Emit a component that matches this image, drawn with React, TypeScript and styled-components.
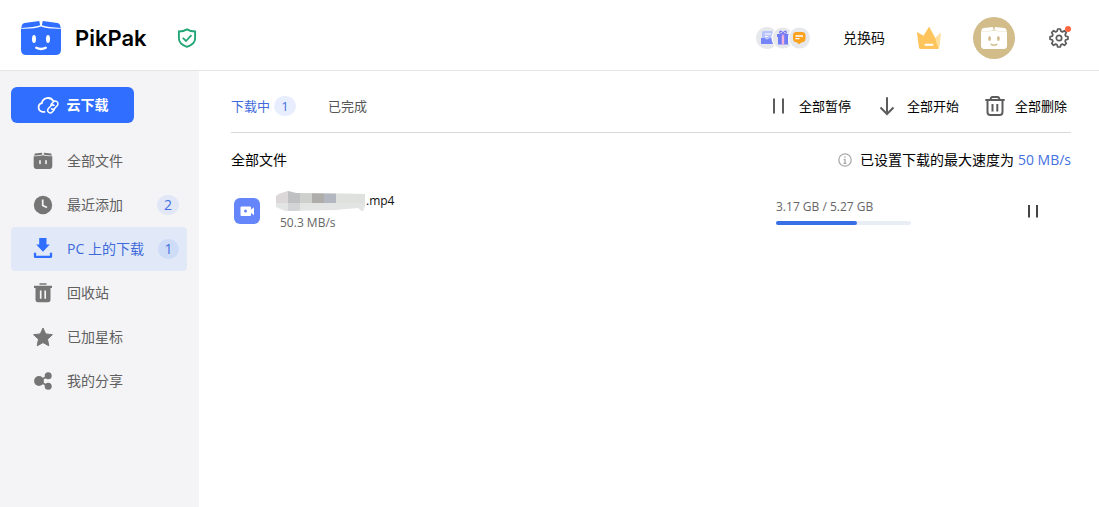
import React from "react";
import styled, { createGlobalStyle } from "styled-components";

const GlobalStyle = createGlobalStyle`
  *, *::before, *::after { box-sizing: border-box; }
  body {
    margin: 0;
    background: #fff;
    color: #111;
    font: 14px/20px "Open Sans", "Noto Sans CJK SC", sans-serif;
  }
  button { font: inherit; color: inherit; background: none; border: 0; padding: 0; cursor: pointer; }
  a { color: inherit; text-decoration: none; }
  svg { display: block; flex: none; }
  ul { list-style: none; margin: 0; padding: 0; }
`;

const Page = styled.div`
  display: flex;
  flex-direction: column;
  min-height: 100vh;
`;

const Header = styled.header`
  display: flex;
  align-items: center;
  justify-content: space-between;
  height: 71px;
  padding: 6px 28px 0 21px;
  border-bottom: 1px solid #e6e6e8;
`;

const Brand = styled.a`
  display: flex;
  align-items: center;
  gap: 14px;
`;

const BrandName = styled.span`
  font: 600 22px/32px Inter, sans-serif;
  color: #000;
`;

const HeaderGroup = styled.div<{ $gap: number }>`
  display: flex;
  align-items: center;
  gap: ${(p) => p.$gap}px;
`;

const Badges = styled.button`
  display: flex;
`;

const Avatar = styled.button`
  display: grid;
  place-items: center;
  width: 42px;
  height: 42px;
  border-radius: 50%;
  background: #d1bc8a;
`;

const SettingsButton = styled.button`
  position: relative;
  display: grid;
  place-items: center;
  width: 24px;
  height: 24px;
`;

const NoticeDot = styled.span`
  position: absolute;
  top: 0;
  right: 0;
  width: 6px;
  height: 6px;
  border-radius: 50%;
  background: #ff6540;
`;

const Body = styled.div`
  display: flex;
  flex: 1;
`;

const Sidebar = styled.aside`
  flex: none;
  width: 199px;
  padding: 16px 12px 16px 11px;
  background: #f4f4f6;
`;

const CloudButton = styled.button`
  display: flex;
  align-items: center;
  justify-content: center;
  gap: 8px;
  width: 123px;
  height: 36px;
  margin-bottom: 16px;
  border-radius: 6px;
  background: #306eff;
  color: #fff;
  font-weight: 700;
`;

const NavLink = styled.a<{ $active?: boolean }>`
  display: flex;
  align-items: center;
  gap: 14px;
  height: 44px;
  padding: 0 8px 0 22px;
  border-radius: 4px;
  background: ${(p) => (p.$active ? "#e1e9f8" : "transparent")};
  color: ${(p) => (p.$active ? "#4069da" : "#606060")};

  svg { color: ${(p) => (p.$active ? "#306eff" : "#757575")}; }
`;

const Count = styled.span<{ $tone: string }>`
  width: 22px;
  height: 20px;
  border-radius: 10px;
  background: ${(p) => p.$tone};
  color: #4470e0;
  text-align: center;
`;

const NavText = styled.span`
  flex: 1;
  white-space: nowrap;
`;

const Main = styled.main`
  flex: 1;
  min-width: 0;
  padding: 0 28px 0 32px;
`;

const Toolbar = styled.div`
  display: flex;
  align-items: center;
  justify-content: space-between;
  height: 62px;
  padding-top: 8px;
  border-bottom: 1px solid #d9d9d9;
  font-size: 13px;
`;

const Tabs = styled.div`
  display: flex;
  gap: 32px;
`;

const Tab = styled.button<{ $active?: boolean }>`
  display: flex;
  align-items: center;
  gap: 4px;
  color: ${(p) => (p.$active ? "#4069da" : "#555")};
`;

const Actions = styled.div`
  display: flex;
  gap: 26px;
  padding-right: 4px;
`;

const Action = styled.button`
  display: flex;
  align-items: center;
  gap: 10px;
  color: #000;

  svg { color: #5c5c5c; }
`;

const Summary = styled.div`
  display: flex;
  align-items: center;
  justify-content: space-between;
  height: 54px;
  color: #000;
`;

const Scope = styled.h1`
  margin: 0;
  font-size: 14px;
  font-weight: 400;
`;

const Limit = styled.p`
  display: flex;
  align-items: center;
  gap: 4px;
  margin: 0;

  svg { margin-right: 4px; color: #aaa; }
  a { color: #4470e0; }
`;

const FileRow = styled.li`
  display: grid;
  grid-template-columns: 1fr 295px;
  align-items: center;
  height: 48px;
`;

const FileInfo = styled.div`
  display: flex;
  align-items: center;
  gap: 16px;
  padding-left: 3px;
`;

const FileName = styled.div`
  display: flex;
  align-items: center;
  height: 24px;
  color: #111;
  font-size: 12px;
`;

const FileSpeed = styled.div`
  padding-left: 4px;
  color: #666;
  font-size: 12px;
`;

const Transfer = styled.div`
  display: flex;
  align-items: center;
  justify-content: space-between;
  padding-right: 28px;
`;

const Progress = styled.div`
  width: 135px;
  color: #666;
  font-size: 12px;
`;

const Track = styled.div`
  height: 4px;
  margin-top: 4px;
  border-radius: 2px;
  background: #e9edf4;
`;

const Fill = styled.div`
  height: 100%;
  border-radius: 2px;
  background: #386fe5;
`;

const PauseButton = styled.button`
  display: grid;
  place-items: center;
  width: 20px;
  height: 20px;
  color: #444;
`;

const LogoBox = () => (
  <svg width="40" height="34" viewBox="0 0 40 34" aria-hidden="true">
    <path d="M0 7.800Q13 8.200 20 5.600Q27 8.200 40 7.800V28.500Q40 34 34.500 34H5.500Q0 34 0 28.500Z" fill="#306eff" />
    <path d="M3.500 2 18.200 0 19.200 4.300Q13 6.700 .2 6.900L1 4Q1.500 2.400 3.500 2Z" fill="#306eff" />
    <path d="M36.500 2 21.800 0 20.800 4.300Q27 6.700 39.800 6.900L39 4Q38.500 2.400 36.500 2Z" fill="#306eff" />
    <ellipse cx="13" cy="18" rx="2" ry="3.900" fill="#fff" />
    <ellipse cx="27" cy="18" rx="2" ry="3.900" fill="#fff" />
    <path d="M15.300 26.700Q20 29.200 24.700 26.700" stroke="#fff" strokeWidth="2.400" strokeLinecap="round" fill="none" />
  </svg>
);

const AvatarBox = () => (
  <svg width="26" height="22" viewBox="0 0 26 22" aria-hidden="true">
    <path d="M2.500 1 12 0 12.700 3Q8 4.500 .2 4.500L.8 2.300Q1.200 1.200 2.500 1ZM23.500 1 14 0 13.300 3Q18 4.500 25.800 4.500L25.200 2.300Q24.800 1.200 23.500 1Z" fill="#fff" />
    <path d="M0 4.400Q8 4.800 13 3.500Q18 4.800 26 4.400V18.500Q26 22 22.500 22H3.500Q0 22 0 18.500Z" fill="#fff" />
    <ellipse cx="8.600" cy="11.500" rx="1.400" ry="2.600" fill="#d1bc8a" />
    <ellipse cx="17.400" cy="11.500" rx="1.400" ry="2.600" fill="#d1bc8a" />
    <path d="M10.200 17.400Q13 18.900 15.800 17.400" stroke="#d1bc8a" strokeWidth="1.500" strokeLinecap="round" fill="none" />
  </svg>
);

const ShieldIcon = () => (
  <svg width="20" height="20" viewBox="0 0 20 20" fill="none" stroke="#21a675" strokeWidth="1.900">
    <path d="M10 1.400Q13.500 3.500 18.100 3.500V10.500Q18.100 16 10 18.800Q1.900 16 1.900 10.500V3.500Q6.500 3.500 10 1.400Z" />
    <path d="M5.800 9.800 9 13 14.400 7.200" strokeWidth="1.800" />
  </svg>
);

const BadgeIcons = () => (
  <svg width="55" height="22" viewBox="0 0 55 22">
    <circle cx="11" cy="11" r="11" fill="#e7e8eb" />
    <rect x="6" y="4" width="11" height="12" rx="1.500" fill="#b9c3fb" />
    <path d="M9 7H15M9 9.500H12" stroke="#fff" />
    <path d="M5 11H8.500Q11 14 13.500 11H17V17H5Z" fill="#7485fa" />
    <circle cx="27" cy="11" r="11.500" fill="#fff" />
    <circle cx="27" cy="11" r="10.500" fill="#e7e8eb" />
    <path d="M21 7H33V10H21ZM22 10H32V17.500H22Z" fill="#6f7bf7" />
    <path d="M25.800 7H28.200V17.500H25.800Z" fill="#f6b3dd" />
    <path d="M27 7Q22.500 6.500 24 4.500Q26 3.500 27 7Q28 3.500 30 4.500Q31.500 6.500 27 7" stroke="#7b7bf2" strokeWidth="1.300" fill="none" />
    <circle cx="43.500" cy="11" r="11.500" fill="#fff" />
    <circle cx="43.500" cy="11" r="10.500" fill="#e7e8eb" />
    <path d="M40 5H46Q49.500 5 49.500 8.500V11.500Q49.500 15 46 15.300L43 17.200L40.500 15.300Q37 15 37 11.500V8.500Q37 5 40 5Z" fill="#fba21f" />
    <path d="M39.500 9H47M39.500 11.700H43.500" stroke="#fff" strokeWidth="1.300" />
  </svg>
);

const CrownIcon = () => (
  <svg width="24" height="24" viewBox="0 0 24 24">
    <path d="M24 6.500 22.500 21Q22.300 23 20.500 23H15L18 12Z" fill="#ffdf9b" />
    <path d="M.5 6.200 6.500 9.700 11.500 1.500Q12 .5 12.700 1.500L18 11.500 21.500 23H3.500Q2 23 1.800 21L0 6.700Q0 6 .5 6.200Z" fill="#ffc55c" />
    <path d="M8.500 18.700H15.500" stroke="#fff" strokeWidth="2" strokeLinecap="round" />
  </svg>
);

const GearIcon = () => (
  <svg width="20" height="20" viewBox="0 0 20 20" fill="none" stroke="#5c5c5c" strokeWidth="1.700" strokeLinejoin="round">
    <path d="M8.700 1H11.300L11.900 3.300 13.300 3.900 15.400 2.700 17.300 4.600 16.100 6.700 16.700 8.100 19 8.700V11.300L16.700 11.900 16.100 13.300 17.300 15.400 15.400 17.300 13.300 16.100 11.900 16.700 11.300 19H8.700L8.100 16.700 6.700 16.100 4.600 17.300 2.700 15.400 3.900 13.300 3.300 11.900 1 11.300V8.700L3.300 8.100 3.900 6.700 2.700 4.600 4.600 2.700 6.700 3.900 8.100 3.300Z" />
    <circle cx="10" cy="10" r="2.700" />
  </svg>
);

const CloudLinkIcon = () => (
  <svg width="22" height="18" viewBox="0 0 22 18" fill="none" stroke="#fff" strokeLinecap="round">
    <path d="M7.500 15.800H5.500A4.400 4.400 0 0 1 4.800 7.200A6.300 6.300 0 0 1 16.300 4.900" strokeWidth="1.800" />
    <g strokeWidth="1.500">
      <path d="M14 8.600 16.300 6.100A2.500 2.500 0 0 1 20.300 9.500L17.600 12.600A2.300 2.300 0 0 1 14.600 12.800" />
      <path d="M17.200 13.800 15.200 16A2.500 2.500 0 0 1 11.400 12.600L14 9.700A2.300 2.300 0 0 1 17 9.400" />
    </g>
  </svg>
);

const FilesIcon = () => (
  <svg width="20" height="20" viewBox="0 0 20 20" fill="currentColor">
    <path d="M2 2.500 9 1.800 9.300 3.500Q6 4.600 1 4.400ZM18 2.500 11 1.800 10.700 3.500Q14 4.600 19 4.400Z" />
    <path d="M.7 5.200Q7 5.300 10 4.200Q13 5.300 19.300 5.200V15Q19.300 18 16.500 18H3.500Q.7 18 .7 15Z" />
    <path d="M7 9.800V12.400M13 9.800V12.400" stroke="#f4f4f6" strokeWidth="1.600" strokeLinecap="round" />
  </svg>
);

const ClockIcon = () => (
  <svg width="20" height="20" viewBox="0 0 20 20">
    <circle cx="10" cy="10" r="9.200" fill="currentColor" />
    <path d="M9.700 4.500V10.500L14 12.500" stroke="#f4f4f6" strokeWidth="1.700" fill="none" />
  </svg>
);

const DownloadIcon = () => (
  <svg width="20" height="22" viewBox="0 0 20 22">
    <path d="M6.200 0H13.500V6.500H16.800L10 13.800 3.200 6.500H6.200Z" fill="currentColor" />
    <path d="M2 14.800V18.800H18V14.800" stroke="currentColor" strokeWidth="2.300" strokeLinejoin="round" fill="none" />
  </svg>
);

const BinIcon = () => (
  <svg width="20" height="20" viewBox="0 0 20 20" fill="currentColor">
    <path d="M6.500 .3H13.500V1.700H6.500ZM1 2.800H19V5H17.500V16.500Q17.500 19.300 15 19.300H5Q2.500 19.300 2.500 16.500V5H1Z" />
    <path d="M7.700 7.500V15.800M12.200 7.500V15.800" stroke="#f4f4f6" strokeWidth="1.700" />
  </svg>
);

const StarIcon = () => (
  <svg width="20" height="20" viewBox="0 0 20 20" fill="currentColor" stroke="currentColor" strokeLinejoin="round">
    <path d="M10 1 12.700 6.900 19.400 7.700 14.500 12.200 15.800 18.800 10 15.600 4.200 18.800 5.500 12.200 .6 7.700 7.300 6.900Z" />
  </svg>
);

const ShareIcon = () => (
  <svg width="20" height="20" viewBox="0 0 20 20" fill="currentColor">
    <circle cx="6" cy="10" r="4.900" />
    <circle cx="15.200" cy="4.800" r="3.500" />
    <circle cx="15.200" cy="15.300" r="3.500" />
    <path d="M6 10 15.200 4.800M6 10 15.200 15.300" stroke="currentColor" strokeWidth="1.700" />
  </svg>
);

const PauseIcon = () => (
  <svg width="20" height="20" viewBox="0 0 20 20" stroke="currentColor" strokeWidth="2">
    <path d="M5 2.500V17.500M14 2.500V17.500" />
  </svg>
);

const RowPauseIcon = () => (
  <svg width="20" height="20" viewBox="0 0 20 20" stroke="currentColor" strokeWidth="2">
    <path d="M6 4V16.500M14 4V16.500" />
  </svg>
);

const ArrowDownIcon = () => (
  <svg width="20" height="20" viewBox="0 0 20 20" fill="none" stroke="currentColor" strokeWidth="2">
    <path d="M10 1.200V17.500M3.500 11.500 10 18 16.500 11.500" />
  </svg>
);

const TrashIcon = () => (
  <svg width="20" height="20" viewBox="0 0 20 20" fill="none" stroke="currentColor" strokeWidth="2">
    <path d="M.3 4H19.700M2.500 4V16Q2.500 19 5.300 19H14.700Q17.500 19 17.500 16V4M5.500 4Q5.700 1 7.500 1H12.500Q14.300 1 14.500 4M7.500 8V15.500M12.300 8V15.500" />
  </svg>
);

const InfoIcon = () => (
  <svg width="14" height="14" viewBox="0 0 14 14" fill="none" stroke="currentColor" strokeWidth="1.300">
    <circle cx="7" cy="7" r="6.200" />
    <path d="M7 3.300V4.700M7 6V10.500M5.700 6.500H7M5.500 10.300H8.500" />
  </svg>
);

const VideoIcon = () => (
  <svg width="26" height="26" viewBox="0 0 26 26">
    <rect width="26" height="26" rx="6" fill="#6585fb" />
    <rect x="6.500" y="8.500" width="10.500" height="9.500" rx="1" fill="#fff" />
    <path d="M16.500 12 20 9.200V17.300L16.500 14.500Z" fill="#fff" />
    <circle cx="11.500" cy="13" r="1.500" fill="#6585fb" />
  </svg>
);

const NameMask = () => (
  <svg width="90" height="20" viewBox="0 0 90 20" role="img" aria-label="已隐藏">
    <clipPath id="mask-shape">
      <path d="M3 3 12 0 20 2 89 3V15L87 21 82 17 60 19 9 20 0 16V5Z" />
    </clipPath>
    <g clipPath="url(#mask-shape)">
      <path d="M0 0H90V20H0Z" fill="#e3e4e4" />
      <path d="M0 0H12V12H0Z" fill="#dcd7d8" />
      <path d="M12 0H24V12H12Z" fill="#bfc0c2" />
      <path d="M24 0H36V12H24Z" fill="#cdd0cc" />
      <path d="M36 0H48V12H36Z" fill="#aeada9" />
      <path d="M48 0H60V12H48Z" fill="#b3b7bf" />
      <path d="M60 0H90V12H60Z" fill="#dfe1df" />
      <path d="M12 12H24V20H12Z" fill="#d3d4d6" />
    </g>
  </svg>
);

const navItems = [
  { label: "全部文件", icon: <FilesIcon /> },
  { label: "最近添加", icon: <ClockIcon />, count: 2 },
  { label: "PC 上的下载", icon: <DownloadIcon />, count: 1, active: true },
  { label: "回收站", icon: <BinIcon /> },
  { label: "已加星标", icon: <StarIcon /> },
  { label: "我的分享", icon: <ShareIcon /> },
];

const actions = [
  { label: "全部暂停", icon: <PauseIcon /> },
  { label: "全部开始", icon: <ArrowDownIcon /> },
  { label: "全部删除", icon: <TrashIcon /> },
];

const percent = Math.round((3.17 / 5.27) * 100);

export default function App() {
  return (
    <Page>
      <GlobalStyle />
      <Header>
        <HeaderGroup $gap={30}>
          <Brand href="#">
            <LogoBox />
            <BrandName>PikPak</BrandName>
          </Brand>
          <ShieldIcon />
        </HeaderGroup>
        <HeaderGroup $gap={32}>
          <Badges aria-label="活动"><BadgeIcons /></Badges>
          <a href="#">兑换码</a>
          <button aria-label="会员"><CrownIcon /></button>
          <Avatar aria-label="账户">
            <AvatarBox />
          </Avatar>
          <SettingsButton aria-label="设置">
            <GearIcon />
            <NoticeDot />
          </SettingsButton>
        </HeaderGroup>
      </Header>
      <Body>
        <Sidebar>
          <CloudButton>
            <CloudLinkIcon />
            云下载
          </CloudButton>
          <nav>
            <ul>
              {navItems.map((item) => (
                <li key={item.label}>
                  <NavLink href="#" $active={item.active} aria-current={item.active ? "page" : undefined}>
                    {item.icon}
                    <NavText>{item.label}</NavText>
                    {item.count && <Count $tone={item.active ? "#cfdcf8" : "#e1e7f6"}>{item.count}</Count>}
                  </NavLink>
                </li>
              ))}
            </ul>
          </nav>
        </Sidebar>
        <Main>
          <Toolbar>
            <Tabs>
              <Tab $active>
                下载中
                <Count $tone="#e8eefd">1</Count>
              </Tab>
              <Tab>已完成</Tab>
            </Tabs>
            <Actions>
              {actions.map((action) => (
                <Action key={action.label}>
                  {action.icon}
                  {action.label}
                </Action>
              ))}
            </Actions>
          </Toolbar>
          <Summary>
            <Scope>全部文件</Scope>
            <Limit>
              <InfoIcon />
              已设置下载的最大速度为
              <a href="#">50 MB/s</a>
            </Limit>
          </Summary>
          <ul>
            <FileRow>
              <FileInfo>
                <VideoIcon />
                <div>
                  <FileName><NameMask />.mp4</FileName>
                  <FileSpeed>50.3 MB/s</FileSpeed>
                </div>
              </FileInfo>
              <Transfer>
                <Progress>
                  3.17 GB / 5.27 GB
                  <Track role="progressbar" aria-label="下载进度" aria-valuenow={percent}>
                    <Fill style={{ width: `${percent}%` }} />
                  </Track>
                </Progress>
                <PauseButton aria-label="暂停"><RowPauseIcon /></PauseButton>
              </Transfer>
            </FileRow>
          </ul>
        </Main>
      </Body>
    </Page>
  );
}
